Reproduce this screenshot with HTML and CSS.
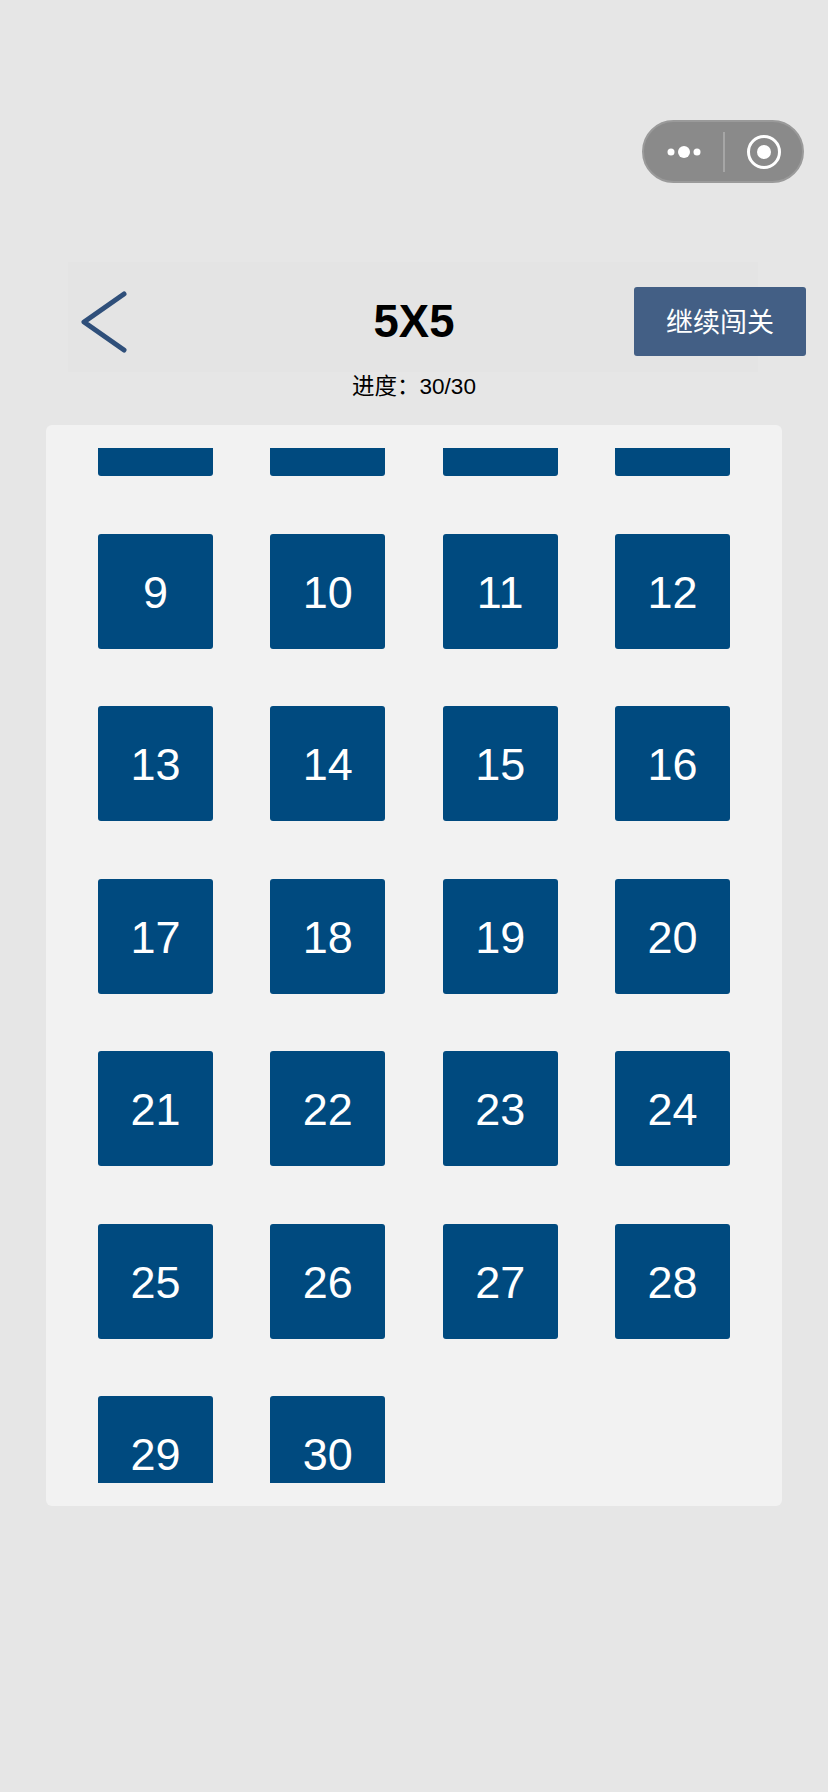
FILE: index.html
```html
<!DOCTYPE html>
<html lang="zh-CN">
<head>
	<meta charset="UTF-8">
	<title>5X5</title>
	<link rel="stylesheet" href="styles.css">
</head>
<body>
	<div class="capsule">
		<svg class="capsuleMore" width="38" height="14" viewBox="0 0 38 14">
			<circle cx="6" cy="7" r="3.5"/>
			<circle cx="19" cy="7" r="6"/>
			<circle cx="32" cy="7" r="3.5"/>
		</svg>
		<span class="capsuleLine"></span>
		<svg class="capsuleHome" width="36" height="36" viewBox="0 0 36 36">
			<circle class="ring" cx="18" cy="18" r="15.5"/>
			<circle cx="18" cy="18" r="7"/>
		</svg>
	</div>
	<div class="top">
		<svg class="back" width="50" height="66" viewBox="0 0 50 66">
			<path d="M45 5 L5 33 L45 61"/>
		</svg>
		<h1 class="title">5X5</h1>
		<div class="next">继续闯关</div>
	</div>
	<p class="progress">进度：30/30</p>
	<div class="panel">
		<div class="levelBox">
			<ul class="levels">
				<!-- 前面几行已滚出可视区 -->
				<li></li><li></li><li></li><li></li>
				<li>9</li><li>10</li><li>11</li><li>12</li>
				<li>13</li><li>14</li><li>15</li><li>16</li>
				<li>17</li><li>18</li><li>19</li><li>20</li>
				<li>21</li><li>22</li><li>23</li><li>24</li>
				<li>25</li><li>26</li><li>27</li><li>28</li>
				<li>29</li><li>30</li>
			</ul>
		</div>
	</div>
</body>
</html>
```

FILE: styles.css
```css
body {
	margin: 0;
	height: 1792px;
	overflow: hidden;
	background: #e6e6e6;
	font-family: "Liberation Sans", "Noto Sans CJK SC", sans-serif;
	color: #000;
}
ul,
h1,
p {
	margin: 0;
	padding: 0;
}
ul {
	list-style: none;
}
.capsule {
	display: flex;
	align-items: center;
	box-sizing: border-box;
	width: 162px;
	height: 63px;
	margin: 120px 24px 0 auto;
	background: #8a8a8a;
	border: 2px solid #9a9a9a;
	border-radius: 32px;
}
.capsuleMore {
	margin-left: 21px;
	fill: #fff;
}
.capsuleLine {
	width: 2px;
	height: 40px;
	margin: 0 21px 0 20px;
	background: #a6a6a6;
}
.capsuleHome {
	fill: #fff;
}
.capsuleHome .ring {
	fill: none;
	stroke: #fff;
	stroke-width: 3;
}
.top {
	display: grid;
	grid-template-columns: 1fr auto 1fr;
	align-items: center;
	box-sizing: border-box;
	width: 690px;
	height: 110px;
	margin: 79px 0 0 68px;
	padding: 9px 9px 0 11px;
	background: #e4e4e4;
}
.back {
	fill: none;
	stroke: #2f4f7a;
	stroke-width: 5;
	stroke-linecap: round;
	stroke-linejoin: round;
}
.title {
	font-size: 45.5px;
	line-height: 52px;
	font-weight: bold;
}
.next {
	justify-self: end;
	width: 172px;
	height: 69px;
	margin-right: -57px;
	background: #435f85;
	border-radius: 3px;
	color: #fff;
	font-size: 27px;
	line-height: 72px;
	text-align: center;
}
.progress {
	font-family: "Liberation Sans", "Noto Sans CJK TC", sans-serif;
	font-size: 22.5px;
	line-height: 30px;
	text-align: center;
}
.panel {
	box-sizing: border-box;
	width: 736px;
	height: 1081px;
	margin: 23px 0 0 46px;
	padding: 23px 52px;
	background: #f2f2f2;
	border-radius: 6px;
}
.levelBox {
	height: 1035px;
	overflow: hidden;
}
.levels {
	display: grid;
	grid-template-columns: repeat(4, 115px);
	grid-auto-rows: 115px;
	justify-content: space-between;
	row-gap: 57.5px;
	margin-top: -87px;
}
.levels li {
	background: #004a7f;
	border-radius: 3px;
	color: #fff;
	font-size: 45px;
	line-height: 117px;
	text-align: center;
}
```
